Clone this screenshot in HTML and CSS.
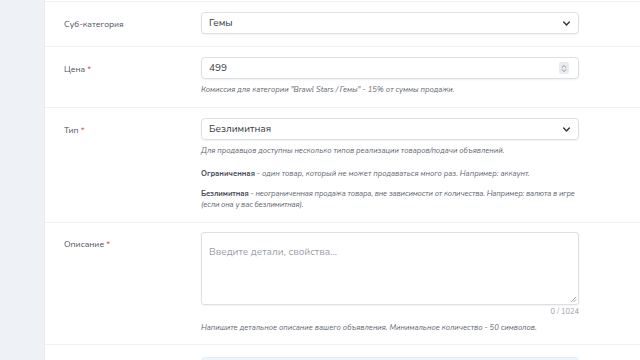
FILE: index.html
```html
<!DOCTYPE HTML>
<html>
<head>
<meta charset="utf-8">
<link rel="stylesheet" href="styles.css">
</head>
<body>
<div class="page">
    <aside class="side"></aside>
    <section class="card">
        <div class="row row-cut"></div>

        <div class="row">
            <label class="label">Суб-категория</label>
            <div class="field">
                <div class="select">
                    <span>Гемы</span>
                    <svg class="chev" viewBox="0 0 10 6" width="7" height="5"><path d="M1 1l4 4 4-4" fill="none" stroke="#333" stroke-width="2" stroke-linecap="round" stroke-linejoin="round"/></svg>
                </div>
            </div>
        </div>

        <div class="row">
            <label class="label">Цена <span class="req">*</span></label>
            <div class="field">
                <div class="select">
                    <span>499</span>
                    <span class="spin">
                        <svg viewBox="0 0 8 12" width="6" height="9"><path d="M1.5 4.5L4 2l2.5 2.5M1.5 7.5L4 10l2.5-2.5" fill="none" stroke="#777" stroke-width="1" stroke-linecap="round" stroke-linejoin="round"/></svg>
                    </span>
                </div>
                <p class="hint">Комиссия для категории "Brawl Stars / Гемы" - 15% от суммы продажи.</p>
            </div>
        </div>

        <div class="row">
            <label class="label">Тип <span class="req">*</span></label>
            <div class="field">
                <div class="select">
                    <span>Безлимитная</span>
                    <svg class="chev" viewBox="0 0 10 6" width="7" height="5"><path d="M1 1l4 4 4-4" fill="none" stroke="#333" stroke-width="2" stroke-linecap="round" stroke-linejoin="round"/></svg>
                </div>
                <p class="hint">Для продавцов доступны несколько типов реализации товаров/подачи объявлений.</p>
                <p class="hint gap"><b>Ограниченная</b> - один товар, который не может продаваться много раз. Например: аккаунт.</p>
                <p class="hint gap2 tight"><b>Безлимитная</b> - неограниченная продажа товара, вне зависимости от количества. Например: валюта в игре<br>(если она у вас безлимитная).</p>
            </div>
        </div>

        <div class="row row-desc">
            <label class="label">Описание <span class="req">*</span></label>
            <div class="field">
                <div class="textarea">
                    <span class="placeholder">Введите детали, свойства...</span>
                    <svg class="grip" viewBox="0 0 8 8" width="7" height="7"><path d="M7 1L1 7M7 4L4 7" stroke="#999" stroke-width="1"/></svg>
                </div>
                <div class="counter">0 / 1024</div>
                <p class="hint">Напишите детальное описание вашего объявления. Минимальное количество - 50 символов.</p>
            </div>
        </div>

        <div class="row row-last">
            <div class="label"></div>
            <div class="field">
                <div class="info"></div>
            </div>
        </div>
    </section>
</div>
</body>
</html>
```

FILE: styles.css
```css
body {
    margin: 0;
    background: #eef1f6;
    font-family: "Nunito", Lato, "Open Sans", sans-serif;
    color: #3d4350;
    overflow: hidden;
}

.page {
    display: flex;
    height: 360px;
}

.side {
    width: 44px;
    flex-shrink: 0;
    background: #eef1f6;
}

.card {
    flex: 1;
    background: #fff;
    border-left: 1px solid #e8ebf0;
    overflow: hidden;
}

.row {
    display: grid;
    grid-template-columns: 137px 378px;
    padding: 10px 20px 12px 19px;
    border-bottom: 1px solid #f0f2f5;
}

.row-cut {
    padding: 0;
    height: 1px;
}

.row-desc {
    padding-top: 9px;
    padding-bottom: 11px;
}

.row-last {
    border-bottom: none;
    padding-top: 12px;
}

.label {
    font-size: 8.6px;
    color: #4d5360;
    padding-top: 6px;
}

.req {
    color: #e04a3f;
}

.select {
    height: 20px;
    border: 1px solid #dcdfe5;
    border-radius: 4px;
    box-shadow: 0 1px 2px rgba(0, 0, 0, 0.06);
    display: flex;
    align-items: center;
    justify-content: space-between;
    padding: 0 8px 0 7px;
    font-size: 10px;
    color: #333842;
}

.chev {
    display: block;
}

.spin {
    width: 10px;
    height: 12px;
    background: #e9ebef;
    border-radius: 2px;
    display: flex;
    align-items: center;
    justify-content: center;
    margin-right: 1px;
}

.hint {
    margin: 5px 0 0;
    font-size: 7.6px;
    line-height: 11px;
    font-style: italic;
    color: #61666f;
}

.hint b {
    font-style: normal;
    font-weight: 700;
    color: #454a55;
}

.hint.gap {
    margin-top: 12px;
}

.hint.gap2 {
    margin-top: 9px;
}

.hint.tight {
    letter-spacing: -0.12px;
}

.textarea {
    position: relative;
    height: 73px;
    border: 1px solid #dcdfe5;
    border-radius: 3px;
    box-shadow: 0 1px 2px rgba(0, 0, 0, 0.06);
    padding: 6px 7px;
    box-sizing: border-box;
}

.placeholder {
    font-size: 10px;
    color: #9a9ea6;
}

.grip {
    position: absolute;
    right: 1px;
    bottom: 1px;
}

.counter {
    text-align: right;
    font-size: 7.5px;
    line-height: 10px;
    color: #9a9ea6;
    margin-top: 2px;
}

.info {
    height: 20px;
    background: #eef6fd;
    border: 1px solid #e2eefa;
    border-radius: 4px;
}
```
